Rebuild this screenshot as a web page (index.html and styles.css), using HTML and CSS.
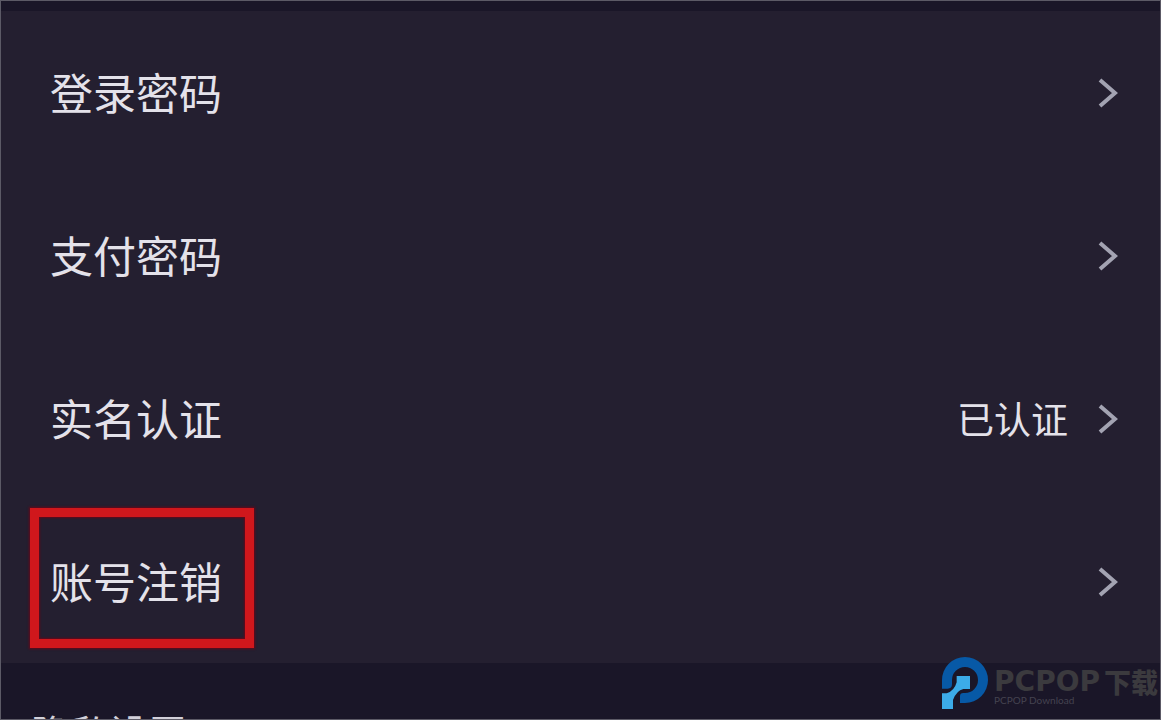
FILE: index.html
```html
<!DOCTYPE html>
<html lang="zh-CN">
<head>
<meta charset="utf-8">
<meta name="viewport" content="width=device-width, initial-scale=1">
<title>账号设置</title>
<link rel="stylesheet" href="styles.css">
</head>
<body>
<main class="screen">
  <nav class="list">
    <a class="row" href="#">
      <span class="label">登录密码</span>
      <svg class="chevron" viewBox="0 0 20 32" aria-hidden="true"><path d="M2 3 L17 16 L2 29"/></svg>
    </a>
    <a class="row" href="#">
      <span class="label">支付密码</span>
      <svg class="chevron" viewBox="0 0 20 32" aria-hidden="true"><path d="M2 3 L17 16 L2 29"/></svg>
    </a>
    <a class="row" href="#">
      <span class="label">实名认证</span>
      <span class="value">已认证</span>
      <svg class="chevron" viewBox="0 0 20 32" aria-hidden="true"><path d="M2 3 L17 16 L2 29"/></svg>
    </a>
    <a class="row" href="#">
      <span class="label marked">账号注销</span>
      <svg class="chevron" viewBox="0 0 20 32" aria-hidden="true"><path d="M2 3 L17 16 L2 29"/></svg>
    </a>
  </nav>
  <h2 class="section-title">隐私设置</h2>
  <div class="brand">
    <svg class="brand-mark" viewBox="36 36 138 156" aria-hidden="true">
      <path fill="#0759a6" d="M36 131 V105 A69 69 0 1 1 105 174 H90 V154 Q90 144 100 144 H105 A39 39 0 1 0 66 105 V118 Q66 131 53 131 Z"/>
      <path fill="#3cabe8" d="M80 93 H120 V132 H100 Q80 136 69 165 V192 H36 V145 H50 Q73 138 80 112 Z"/>
    </svg>
    <div class="brand-text">
      <div class="brand-name"><span class="latin">PCPOP</span><span class="han">下载</span></div>
      <div class="brand-sub">PCPOP Download</div>
    </div>
  </div>
</main>
</body>
</html>
```
FILE: styles.css
```css
* {
  box-sizing: border-box;
}

body {
  margin: 0;
  background: #1a1628;
  font-family: "Noto Sans CJK SC", sans-serif;
}

.screen {
  position: relative;
  height: 100vh;
  overflow: hidden;
  padding-top: 10px;
  border: 1px solid #5c5a66;
  background: #1a1628;
}

.list {
  display: flex;
  flex-direction: column;
  background: #241f30;
}

.row {
  display: flex;
  align-items: center;
  height: 163px;
  padding: 0 42px 0 49px;
  color: #e4e2ea;
  text-decoration: none;
}

.label {
  margin-right: auto;
  padding-bottom: 4px;
  font-size: 43px;
  line-height: 64px;
}

.value {
  margin-right: 30px;
  padding-bottom: 2px;
  font-size: 37px;
  line-height: 54px;
}

.chevron {
  width: 20px;
  height: 32px;
  fill: none;
  stroke: #a3a3b2;
  stroke-width: 4;
}

.marked {
  position: relative;
}

.marked::after {
  content: "";
  position: absolute;
  inset: -40px -32px -32px -20px;
  border: 9px solid #d0171c;
  box-shadow: 0 0 2px 1px #64081a, inset 0 0 2px 1px #64081a;
}

.section-title {
  margin: 40px 0 0 30px;
  color: #d2d0da;
  font-size: 39px;
  font-weight: 400;
  line-height: 56px;
}

.brand {
  position: absolute;
  right: 2px;
  bottom: 10px;
  display: flex;
  align-items: flex-start;
  gap: 6px;
}

.brand-mark {
  width: 46px;
  height: 52px;
}

.brand-text {
  padding-top: 12px;
  color: #3b3a3e;
}

.brand-name {
  display: flex;
  align-items: center;
  gap: 4px;
  height: 26px;
  font-weight: 900;
}

.latin {
  font-family: "DejaVu Sans", sans-serif;
  font-size: 28px;
  line-height: 26px;
}

.han {
  font-size: 27px;
  line-height: 26px;
}

.brand-sub {
  color: #454350;
  font-family: Lato, sans-serif;
  font-size: 10px;
  line-height: 10px;
}
```
